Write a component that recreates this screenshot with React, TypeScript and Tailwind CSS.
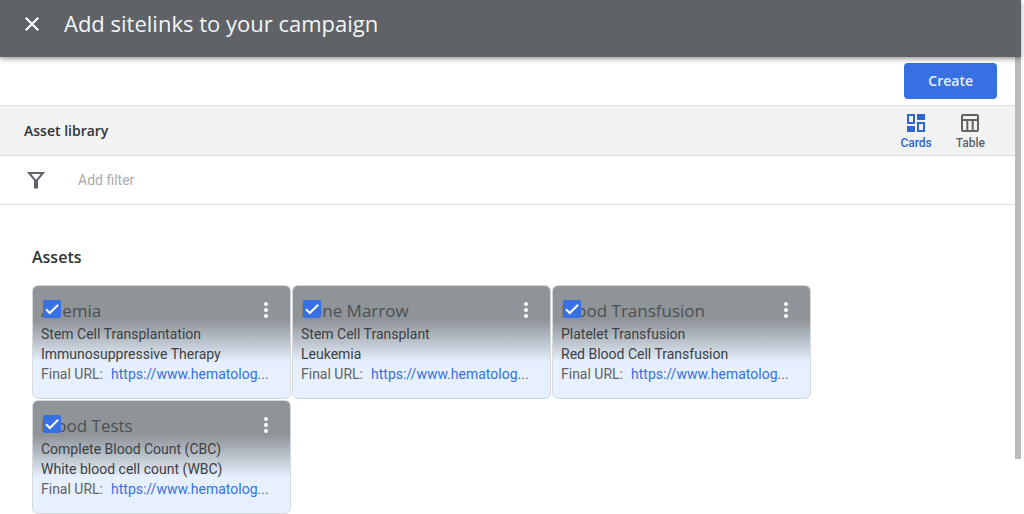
import { useState } from 'react'
import clsx from 'clsx'

type Asset = {
  title: string
  lines: [string, string]
  url: string
}

const assets: Asset[] = [
  { title: 'Anemia', lines: ['Stem Cell Transplantation', 'Immunosuppressive Therapy'], url: 'https://www.hematolog' },
  { title: 'Bone Marrow', lines: ['Stem Cell Transplant', 'Leukemia'], url: 'https://www.hematolog' },
  { title: 'Blood Transfusion', lines: ['Platelet Transfusion', 'Red Blood Cell Transfusion'], url: 'https://www.hematolog' },
  { title: 'Blood Tests', lines: ['Complete Blood Count (CBC)', 'White blood cell count (WBC)'], url: 'https://www.hematolog' },
]

function Header() {
  return (
    <header className="relative z-10 flex h-[57px] shrink-0 items-center gap-5 bg-[#5f6367] px-5 pb-2.5 shadow-[0_2px_5px_rgba(0,0,0,0.4)]">
      <button type="button" aria-label="Close" className="flex size-6 items-center justify-center text-white">
        <svg viewBox="0 0 24 24" className="size-6" fill="currentColor">
          <path d="M19 6.41 17.59 5 12 10.59 6.41 5 5 6.41 10.59 12 5 17.59 6.41 19 12 13.41 17.59 19 19 17.59 13.41 12z" />
        </svg>
      </button>
      <h1 className="font-['Open_Sans','Roboto',sans-serif] text-[22px] text-[#f4f5f6]">Add sitelinks to your campaign</h1>
    </header>
  )
}

function ViewToggle() {
  const [view, setView] = useState('cards')

  return (
    <div className="flex gap-6">
      <button
        type="button"
        onClick={() => setView('cards')}
        className={clsx('flex flex-col items-center text-xs font-medium', view === 'cards' ? 'text-[#2f66d3]' : 'text-[#5f6368]')}
      >
        <svg viewBox="0 0 24 24" className="size-6" fill="currentColor">
          <path fillRule="evenodd" d="M3 3h8v10H3zM5 5v6h4V5zM13 3h8v6h-8zM3 15h8v6H3zM13 11h8v10h-8zM15 13v6h4v-6z" />
        </svg>
        Cards
      </button>
      <button
        type="button"
        onClick={() => setView('table')}
        className={clsx('flex flex-col items-center text-xs font-medium', view === 'table' ? 'text-[#2f66d3]' : 'text-[#5f6368]')}
      >
        <svg viewBox="0 0 24 24" className="size-6" fill="none" stroke="currentColor" strokeWidth={2}>
          <rect x="4" y="4" width="16" height="16" rx="1" />
          <path d="M4 9h16M9.3 9v11M14.7 9v11" />
        </svg>
        Table
      </button>
    </div>
  )
}

function AssetCard({ asset }: { asset: Asset }) {
  const [checked, setChecked] = useState(true)

  return (
    <article className="relative w-[259px] rounded-md border border-[#d5d9dc] bg-[#e7f0fe] bg-linear-to-b from-[#8f9498] from-30% to-[#e7f0fe] to-68% px-2 pt-3 pb-3.5">
      <div className="flex items-center justify-between">
        <h3 className="font-['Open_Sans','Roboto',sans-serif] text-[17px] leading-[26px] text-[#4c5053]">{asset.title}</h3>
        <button type="button" aria-label={`More options for ${asset.title}`} className="mr-1 text-white">
          <svg viewBox="0 0 24 24" className="size-6" fill="currentColor">
            <circle cx="12" cy="5" r="2" />
            <circle cx="12" cy="11" r="2" />
            <circle cx="12" cy="17" r="2" />
          </svg>
        </button>
      </div>
      <label className="absolute top-3.5 left-2.5 size-[18px]">
        <input
          type="checkbox"
          aria-label={asset.title}
          checked={checked}
          onChange={() => setChecked(!checked)}
          className="block size-[18px] appearance-none rounded-xs border-2 border-white checked:border-[#3670e2] checked:bg-[#3670e2]"
        />
        {checked && (
          <svg viewBox="0 0 18 18" className="pointer-events-none absolute inset-0 size-[18px]" fill="none" stroke="white" strokeWidth={2}>
            <path d="M3 9.2 6.8 13 15.2 4.8" />
          </svg>
        )}
      </label>
      <p className="leading-5 text-[#3c4043]">{asset.lines[0]}</p>
      <p className="leading-5 text-[#3c4043]">{asset.lines[1]}</p>
      <p className="flex leading-5 text-[#5f6368]">
        <span className="mr-2">Final URL:</span>
        <a href={asset.url} className="text-[#3670e2]">{asset.url}</a>
        <span>...</span>
      </p>
    </article>
  )
}

export default function App() {
  return (
    <div className="flex h-screen flex-col overflow-hidden bg-white pr-[3px] font-['Roboto',sans-serif] text-sm text-[#3c4043]">
      <Header />
      <div className="flex min-h-0 flex-1">
        <main className="min-w-0 flex-1">
          <div className="flex h-12 items-center justify-end px-[18px]">
            <button type="button" className="h-9 rounded-sm bg-[#3670e2] px-6 font-['Open_Sans','Roboto',sans-serif] text-sm font-semibold text-[#e8f0fe]">
              Create
            </button>
          </div>
          <section className="flex h-[51px] items-center justify-between border-y border-[#dadcdd] bg-[#f1f3f3] pr-[30px] pl-6">
            <h2 className="font-['Open_Sans','Roboto',sans-serif] text-sm font-semibold text-[#303336]">Asset library</h2>
            <ViewToggle />
          </section>
          <div className="flex h-[49px] items-center gap-[30px] border-b border-[#dadcdd] px-6">
            <svg viewBox="0 0 24 24" className="size-6 text-[#5f6368]" fill="none" stroke="currentColor" strokeWidth={2}>
              <path d="M5 5h14L13 12.2V19.5h-2v-7.3z" />
            </svg>
            <input
              type="text"
              aria-label="Add filter"
              placeholder="Add filter"
              className="min-w-0 flex-1 outline-none placeholder:text-[#a9abad]"
            />
          </div>
          <section className="pt-10 pl-8">
            <h2 className="mb-4 font-['Open_Sans','Roboto',sans-serif] text-base font-semibold text-[#303336]">Assets</h2>
            <div className="flex flex-wrap gap-px">
              {assets.map(asset => (
                <AssetCard key={asset.title} asset={asset} />
              ))}
            </div>
          </section>
        </main>
        <div className="w-1.5">
          <div className="h-[88%] bg-[#bcbcbc]" />
        </div>
      </div>
    </div>
  )
}
